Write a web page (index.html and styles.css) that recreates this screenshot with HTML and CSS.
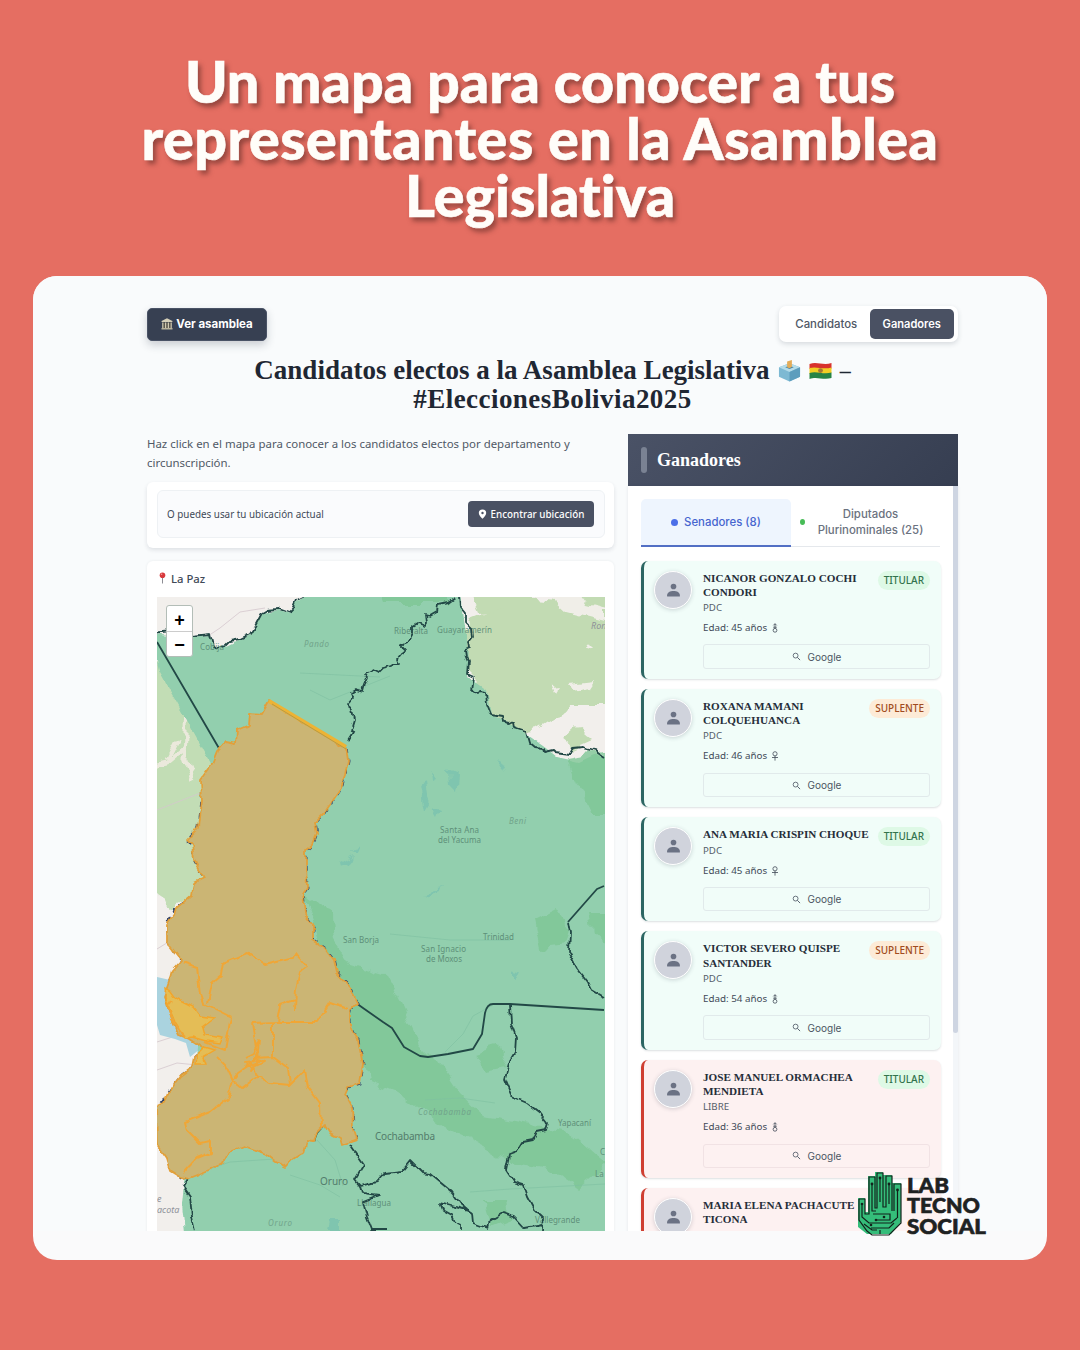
FILE: index.html
```html
<!DOCTYPE html>
<html lang="es">
<head>
<meta charset="utf-8">
<title>Candidatos electos a la Asamblea Legislativa</title>
<link rel="stylesheet" href="styles.css">
</head>
<body>
<svg class="sprite" aria-hidden="true">
  <symbol id="person" viewBox="0 0 16 16"><circle cx="8" cy="4.2" r="3"/><path d="M1.2 15v-1.4C1.2 10.6 4.400 9 8 9s6.800 1.600 6.800 4.600V15z"/></symbol>
  <symbol id="search" viewBox="0 0 10 10"><circle cx="4" cy="4" r="2.700" fill="none" stroke="currentColor" stroke-width=".9"/><path d="M6 6l3 3" stroke="currentColor" stroke-width="1"/></symbol>
  <symbol id="male" viewBox="0 0 8 10"><g fill="none" stroke="currentColor" stroke-width=".8"><circle cx="4" cy="7.300" r="1.900"/><path d="M4 5.400V.8M2.300 2.400L4 .7l1.700 1.700M2.200 4.200h3.600"/></g></symbol>
  <symbol id="female" viewBox="0 0 8 10"><g fill="none" stroke="currentColor" stroke-width=".8"><circle cx="4" cy="2.800" r="2.100"/><path d="M4 5v4.600M1 6.500h6"/></g></symbol>
</svg>

<h1 class="headline">Un mapa para conocer a tus<br><span class="headline-wide">representantes en la Asamblea</span><br>Legislativa</h1>

<main class="panel">
  <div class="app">
    <div class="topbar">
      <button class="btn-assembly">
        <svg width="12" height="12" viewBox="0 0 12 12"><path d="M6 .3L.6 3v1h10.800V3z" fill="#d5cfb8"/><path d="M1.500 4.500h9V10h-9z" fill="#5b574d"/><path d="M1.800 4.500v5.500M4.600 4.500v5.500M7.400 4.500v5.500M10.200 4.500v5.500" stroke="#cfc9b2" stroke-width="1.200"/><path d="M.5 10h11v1.500H.5z" fill="#b9b39c"/></svg>
        Ver asamblea
      </button>
      <div class="switch"><span class="switch-item">Candidatos</span><span class="switch-item switch-on">Ganadores</span></div>
    </div>

    <h2 class="title"><span class="title-line"><span class="title-main">Candidatos electos a la Asamblea Legislativa</span>
      <svg class="ballot" width="23" height="24" viewBox="0 0 24 24"><path d="M1 8l11-4 11 4v10l-11 5L1 18z" fill="#7db9d3"/><path d="M1 8l11-4 11 4-11 5z" fill="#b5dce9"/><path d="M12 13l11-5v10l-11 5z" fill="#5d9dbd"/><path d="M7.500 8L12 6.500 16.500 8 12 10z" fill="#4c86a1"/><path d="M9.500 2l5-1.500v7L12 9 9.500 8z" fill="#e3ac59"/></svg>
      <svg class="flag" width="23" height="18" viewBox="0 0 23 18"><path d="M.5 2C8-1 14 4 22.500 1v5.500C14 9 8 4 .5 7z" fill="#d8322d"/><path d="M.5 6C8 4 14 8 22.500 5.500V11C14 14 8 9 .5 12z" fill="#f2ce24"/><path d="M.5 11C8 8.500 14 13 22.500 10.500V16C14 18.500 8 14 .5 17z" fill="#278345"/><circle cx="11.500" cy="8.600" r="2.400" fill="#a77634"/></svg>
      <span class="title-dash">–</span></span>
      <span class="title-line title-tag">#EleccionesBolivia2025</span></h2>

    <div class="columns">
      <section class="left">
        <p class="intro">Haz click en el mapa para conocer a los candidatos electos por departamento y circunscripción.</p>
        <div class="locate-card">
          <div class="locate">
            <span>O puedes usar tu ubicación actual</span>
            <button class="btn-locate"><svg width="9" height="10" viewBox="0 0 9 10"><path d="M4.500.4a3.700 3.700 0 0 1 3.700 3.700c0 2.200-2 4-3.700 5.700C2.800 8.100.8 6.300.8 4.100A3.700 3.700 0 0 1 4.500.4z" fill="#fff"/><circle cx="4.500" cy="4" r="1.200" fill="#4a5366"/></svg>Encontrar ubicación</button>
          </div>
        </div>
        <div class="map-card">
          <div class="place"><svg width="7" height="12" viewBox="0 0 7 12"><path d="M3.500 5v6.500" stroke="#8d8d94" stroke-width="1"/><circle cx="3.500" cy="3.200" r="2.800" fill="#d8393c"/><circle cx="2.600" cy="2.300" r=".8" fill="#f2a3a0"/></svg>La Paz</div>
          <div class="map">
            <svg class="map-canvas" viewBox="157 597 448 634" width="448" height="634">
              <defs>
                <filter id="rough" filterUnits="userSpaceOnUse" x="140" y="580" width="480" height="670" color-interpolation-filters="sRGB"><feTurbulence type="fractalNoise" baseFrequency=".12" numOctaves="1" seed="4"/><feDisplacementMap in="SourceGraphic" scale="7" xChannelSelector="R" yChannelSelector="G"/></filter>
                <filter id="rough-land" filterUnits="userSpaceOnUse" x="140" y="580" width="480" height="670" color-interpolation-filters="sRGB"><feTurbulence type="fractalNoise" baseFrequency=".06" numOctaves="2" seed="9"/><feDisplacementMap in="SourceGraphic" scale="16" xChannelSelector="R" yChannelSelector="G"/></filter>
              </defs>
              <rect x="157" y="597" width="448" height="634" fill="#f2efec"/>
              <!-- neighbouring countries -->
              <g filter="url(#rough-land)">
                <path d="M145 655l25 12 20 25 40 50 5 60-20 100-20-5-20 10-30-20z" fill="#c2ddb5"/>
                <path d="M180 680l8 25-2 55 8 22M145 768l22-5 20-17M166 760l10-20" fill="none" stroke="#ebe9dc" stroke-width="5"/>
                <path d="M515 590l20 8 22 2 20 12 40 0v95h-45l-35 22-25 4-18-18-25-22 12-10-18-18-6-25 12-20 30-12z" fill="#c2dbb3"/>
                <path d="M468 590h40v22l-30 2z" fill="#c2dbb3"/>
                <path d="M543 590h30l32 20v10l-40-10zM568 685l26-3-4 6-18 3zM552 684l8-1-5 8zM590 640l5 8-8-2z" fill="#f0eee8"/>
                <path d="M578 592h35v20l-25-6zM562 740l15-14 16 14-20 9z" fill="#c2dbb3"/>
              </g>
              <path d="M157 1042l25-8M157 1070l20-7 20 2M192 664l22-12M205 638l15-10 20-16 25-4M157 949l13-8M157 810l46-18" fill="none" stroke="#d4c6cd" stroke-width=".8"/>
              <path d="M157 977l13 3-5 15 8 25 10 17 22 8-15 12-4-14-11-4-15-4-3-10z" fill="#aad3df"/>

              <!-- departments -->
              <g filter="url(#rough)">
                <path d="M150 633l42 4 18-2 3 12 14-1 23-11 12-22 16-3 11 4 8-12 14-10h150l3 28 4 26-1 30 20 14 5 24 23 13 11 7 16 11 15 12 22 5 17-8 32 10v500H188l-6-60 40-420-63-113z" fill="#92cfae"/>
              </g>
              <g fill="#7fc796" filter="url(#rough-land)" opacity=".8">
                <path d="M565 757l50-8v72l-20-15-20-25z"/>
                <path d="M303 895l30 20 2 27 14 22 36 10 15 28 20 42 16 16 20 30 27 26 33 5 55 12 36 30-28 25-20-15-47-10-35-20-28-13-27-20-30-20-25-10-15-50z"/>
                <path d="M535 920l20-10 14 20-4 15-24 3zM590 912h25v40l-22-20zM585 795h30v20h-25zM378 590h70v12h-65zM475 1055l25-8 8 20-25 4zM482 1200l24 0 4 20-20 8z"/>
              </g>
              <g fill="#76c0b0" filter="url(#rough-land)" opacity=".65">
                <path d="M418 785l9-3 2 14-7 12zM448 770l9 4-2 18-6-6zM428 806l10 4-3 7zM432 770l5 7-4 2zM495 760l12 5-3 6zM338 864l14-8-4 10-9 3zM422 892l25-3-15 6zM350 852l8-10-3 12zM513 968l6 8-6 3zM326 1220h16v10h-18z"/>
              </g>
              <path d="M445 1052l18-18 10-18 20-11M425 1100l35-2 35 5M290 1175l30 10 20 12M200 1172l30-10 60-4M317 1140l18 20 8 26M300 673l80 4M310 690l20 10 60-24M510 940l-60 0-60-6M470 1192l40-3 95-5" fill="none" stroke="#7ebfa1" stroke-width=".6"/>

              <!-- place names -->
              <g class="town">
                <text x="394" y="634" textLength="34">Riberalta</text><text x="437" y="633" textLength="55">Guayaramerín</text>
                <text x="440" y="833" textLength="39">Santa Ana</text><text x="438" y="843" textLength="43">del Yacuma</text>
                <text x="483" y="940" textLength="31">Trinidad</text><text x="343" y="943" textLength="36">San Borja</text>
                <text x="421" y="952" textLength="45">San Ignacio</text><text x="426" y="962" textLength="36">de Moxos</text>
                <text x="558" y="1126" textLength="33">Yapacaní</text><text x="357" y="1206" textLength="34">Llallagua</text>
                <text x="535" y="1223" textLength="45">Vallegrande</text><text x="200" y="650" textLength="24">Cobija</text>
                <text x="595" y="1177">La</text><text x="600" y="1155">C</text>
              </g>
              <g class="town town-big"><text x="375" y="1140" textLength="60">Cochabamba</text><text x="320" y="1185" textLength="28">Oruro</text></g>
              <g class="region"><text x="304" y="647" textLength="25">Pando</text><text x="509" y="824" textLength="17">Beni</text><text x="418" y="1115" textLength="53">Cochabamba</text><text x="268" y="1226" textLength="24">Oruro</text><text class="foreign" x="591" y="629">Ron</text><text class="foreign" x="157" y="1202">e</text><text class="foreign" x="157" y="1213">acota</text></g>

              <!-- department limits -->
              <path class="limit" d="M157 642L220 750M356 1003l7 5 20 14 9 6 12 19 16 9 8 1 20-3 25-5 9-15 3-21q2-9 8-9h17l94 6M604 886l-7 3-29 33"/>
              <g class="limit" filter="url(#rough)">
                <path d="M150 633l22-2 20 5 18-2 3 12 4 2 8-2 5-5 10-2 10-5 5-8 7-13 5-3 11-1 11 4 4-4 4-9 10-5"/>
                <path d="M455 597l-7 5-10 2-1 8-7 4-4-1 1 8-2 3-7-3-5 3v8l-5 9-7 3 4 4-5 4-3 4 2 5-6 0-2 3-8 2-4 4-6-3-8 4 3 4-3 7-2 8-7-2-5 3 3 4-7 8 5 4 2 10-3 10 3 4-5 8"/>
                <path d="M460 597l1 10 5 6v9l6 6 1 9-4 5 1 6-5 2 1 7 2 5-1 12 7 3-2 14 5 4 2-3 7 1 1 11 4 10 12 2 1 7 5 1 4-2 1 6 12 4 3 11 6 5 8 1 1 3 9-2 2 2 15 2 3-6 10-1 12 3 10 7"/>
                <path d="M568 922l2 11-1 20 8 15 11 14 4 8 12 7M510 1005l1 18 5 14-1 16-6 10-4 15 8 19 14 6 13 10 8 10-2 7-10 2-3 8-10 2-6 10-8 3-3 15 8 12 10 3 4 12 7 13 8 7-1 14"/>
                <path d="M350 1145l14 20-9 15 5 6 17-4 8-9 17-2 8-10 12 12 8 1 22 18 8 11 12 10 1 10 14 5 2-7 14-8 12 4 10 11 17-3M468 1210l-13-3-15-4 3 7 9 5 3 7 7 3 0 6M360 1186l2 8 16 2-15 6 4 15 5 13h15"/>
                <path d="M180 1175l8 4-5 8 7 10 2 20 3 13M314 1142l3-8 8-9"/>
              </g>

              <!-- La Paz and its districts -->
              <g filter="url(#rough)">
                <path class="lapaz-shadow" d="M346 748l2 12-3 16-5 14-15 22-10 10 2 12-4 10-7 6v14l1 24-4 6 2 20 8 10v16l12 8 9 12 3 13 13 14 7 16-7 7v12l8 18 5 25-3 18-12 4-3 7 7 13 1 20 4 13M205 1048l-10 9-2 10-11 8-12 15-8 12-5 3v38l11 14 4 13 12 8M203 780l-1 20-3 27-12 13 6 8 2 14 10 17-10 5-2 12-18 12-8 17 2 17 12 18-8 12-4 12"/>
                <path class="lapaz" d="M269 701L346 748l2 12-3 16-5 14-15 22-10 10 2 12-4 10-7 6v14l1 24-4 6 2 20 8 10v16l12 8 9 12 3 13 13 14 7 16-7 7v12l8 18 5 25-3 18-12 4-3 7 7 13 1 20 4 13-15 5-2-7-10-5-5-8-8 8-3 9-7-1-3 11-11 7-7 8-10-5-10-8-22-8-15 6-5 10-15 9-20 8-10-3-8-5-4-13-10-14-1-38 8-4 5-11 11-15 12-9 2-10 10-8-15-10-10-4-7-15-8-24 5-14 3-12 9-10-14-18v-17l7-10 2-7 16-13 2-12 10-5-10-18-2-15-5-5 12-13 3-27-1-20 10-14 6-15 9-10 10 2 1-12 12-5 1-13 12 1z"/>
                <path d="M165 988l5 3 5 7 18 9 7 9 15 2-12 9 2 8 17 3-2 5-13-2-14-4-8 1-10-16-8-19zM197 1055l8-8 10 3-12 7 2 6-9 0z" class="shore"/>
                <path class="district" d="M182 962l15 5 3 28 3 8 14 7 14 7-6 33-20-8M208 1003l4-20 9-8 2-12 24-10 18 12 28-7 2-5 12 14-7 5-4 18-1 20M252 1023l25-1 3-17 15-5M277 1022h40l13-20 17 6M252 1023l5 32-4 7M273 1022v35l15 11 2 17 15-15 3 17 12 16 1 24M253 1062l-15 10-6 8 10 8 15-11-4-15M257 1077l13 6 20 2M253 1058l20-1M217 1057l8 8 7 15-4 18-18 14-25 10 2 8 13 13 10-2v12l-13 5-14 15M245 1058l8-4 6-14-2 20 7 2-12 6-7-6 14-1-9 10 6-18M172 1001l-4 5 4 14 13 16"/>
              </g>
              <path d="M269 701l77 46" stroke="#edb334" stroke-width="4"/><path d="M272 704l74 45" stroke="#b59a48" stroke-width="1"/>
            </svg>
            <div class="zoom"><span>+</span><span>−</span></div>
          </div>
        </div>
      </section>

      <section class="right">
        <header class="winners"><i class="winners-bar"></i><h3>Ganadores</h3></header>
        <div class="winners-body">
          <div class="scroll">
            <nav class="tabs">
              <div class="tab tab-on"><i class="dot blue"></i><span>Senadores (8)</span></div>
              <div class="tab"><i class="dot green"></i><span>Diputados Plurinominales (25)</span></div>
            </nav>
            <div class="cards">
              <article class="card">
                <div class="avatar"><svg><use href="#person"/></svg></div>
                <div class="info"><div class="head"><h4>NICANOR GONZALO COCHI<br>CONDORI</h4><span class="badge titular">TITULAR</span></div>
                  <p class="party">PDC</p><p class="age">Edad: 45 años <svg><use href="#male"/></svg></p><div class="google"><svg><use href="#search"/></svg>Google</div></div>
              </article>
              <article class="card">
                <div class="avatar"><svg><use href="#person"/></svg></div>
                <div class="info"><div class="head"><h4>ROXANA MAMANI<br>COLQUEHUANCA</h4><span class="badge suplente">SUPLENTE</span></div>
                  <p class="party">PDC</p><p class="age">Edad: 46 años <svg><use href="#female"/></svg></p><div class="google"><svg><use href="#search"/></svg>Google</div></div>
              </article>
              <article class="card">
                <div class="avatar"><svg><use href="#person"/></svg></div>
                <div class="info"><div class="head"><h4>ANA MARIA CRISPIN CHOQUE</h4><span class="badge titular">TITULAR</span></div>
                  <p class="party">PDC</p><p class="age">Edad: 45 años <svg><use href="#female"/></svg></p><div class="google"><svg><use href="#search"/></svg>Google</div></div>
              </article>
              <article class="card">
                <div class="avatar"><svg><use href="#person"/></svg></div>
                <div class="info"><div class="head"><h4>VICTOR SEVERO QUISPE<br>SANTANDER</h4><span class="badge suplente">SUPLENTE</span></div>
                  <p class="party">PDC</p><p class="age">Edad: 54 años <svg><use href="#male"/></svg></p><div class="google"><svg><use href="#search"/></svg>Google</div></div>
              </article>
              <article class="card libre">
                <div class="avatar"><svg><use href="#person"/></svg></div>
                <div class="info"><div class="head"><h4>JOSE MANUEL ORMACHEA<br>MENDIETA</h4><span class="badge titular">TITULAR</span></div>
                  <p class="party">LIBRE</p><p class="age">Edad: 36 años <svg><use href="#male"/></svg></p><div class="google"><svg><use href="#search"/></svg>Google</div></div>
              </article>
              <article class="card libre">
                <div class="avatar"><svg><use href="#person"/></svg></div>
                <div class="info"><div class="head"><h4>MARIA ELENA PACHACUTE<br>TICONA</h4></div></div>
              </article>
            </div>
          </div>
          <div class="track"><i class="thumb"></i></div>
        </div>
      </section>
    </div>
  </div>

  <svg class="logo" width="132" height="68" viewBox="856 1170 132 68">
    <path d="M858 1198h7v14h3v-36h7v-4h8v3h9v8h9v39l-10 12h-24l-9-7z" fill="#35bd7a"/>
    <g fill="none" stroke="#12221b" stroke-width="1.200">
      <path d="M859 1199v21l8 11 5 4h17l12-12v-39h-7v27M859 1199h6v15h4v-37h6v31h2v-35h6v34h3v-31h6v35"/>
      <path d="M872 1185v26h4M880 1178v24M889 1184v20M897.500 1191v27M873 1214h17v6h-14M862 1205v12l7 6h22l6-5M864 1224l8 6h5M871 1228h18l5-5M880 1234v-4"/>
    </g>
    <g fill="#12221b"><circle cx="872" cy="1184" r="1.400"/><circle cx="880" cy="1178" r="1.400"/><circle cx="889" cy="1184" r="1.400"/><circle cx="897.500" cy="1190" r="1.400"/><circle cx="884" cy="1217" r="1.300"/><circle cx="862" cy="1204" r="1.300"/><circle cx="876" cy="1220" r="1.300"/><circle cx="871" cy="1225" r="1.300"/></g>
    <g class="logo-text"><text x="907" y="1192.500" textLength="42" lengthAdjust="spacingAndGlyphs">LAB</text><text x="907" y="1213" textLength="73" lengthAdjust="spacingAndGlyphs">TECNO</text><text x="907" y="1233.500" textLength="79" lengthAdjust="spacingAndGlyphs">SOCIAL</text></g>
  </svg>
</main>
</body>
</html>
```
FILE: styles.css
```css
* { box-sizing: border-box; }
body { margin: 0; width: 1080px; height: 1350px; overflow: hidden; background: #e56e62; font-family: "Noto Sans", sans-serif; color: #404957; }
h1, h2, h3, h4, p { margin: 0; }
button { border: 0; }
svg { flex: none; }
.sprite { display: none; }

.headline { height: 276px; padding-top: 52px; text-align: center; font: 900 57.500px/57px Lato, sans-serif; font-variant-ligatures: none; color: #fffdf9; text-shadow: 3px 4px 5px rgba(90, 40, 35, .6); -webkit-text-stroke: .6px #fffdf9; }
.headline-wide { letter-spacing: .45px; }

.panel { position: relative; width: 1014px; height: 984px; margin: 0 33px; border-radius: 24px; background: #fafafb; overflow: hidden; }
.app { height: 955px; padding: 30px 89px 0 114px; overflow: hidden; background: #f9fbfc; }

.topbar { display: flex; justify-content: space-between; align-items: center; height: 36px; }
.btn-assembly { display: flex; align-items: center; justify-content: center; gap: 3px; width: 120px; height: 33px; padding: 0; border-radius: 5px; border: 1px solid #4a5366; background: #374052; color: #fff; font: 700 11.500px Inter, sans-serif; box-shadow: 0 4px 8px rgba(40, 50, 70, .22); }
.switch { display: flex; width: 179px; height: 36px; padding: 3px 4px; border-radius: 7px; background: #fff; box-shadow: 0 2px 5px rgba(40, 50, 70, .16); }
.switch-item { display: flex; align-items: center; justify-content: center; width: 87px; border-radius: 5px; font: 500 11.400px Inter, sans-serif; color: #505866; }
.switch-on { width: 85px; background: #4a5163; color: #fff; font-weight: 600; font-size: 11.100px; }

.title { margin-top: 14px; height: 78px; font: 700 27px/29px "Liberation Serif", serif; color: #1f2733; }
.title-line { display: flex; justify-content: center; align-items: center; gap: 8px; height: 29px; }
.title-tag { letter-spacing: .45px; }
.title-dash { width: 11px; font-size: 22px; }

.columns { display: grid; grid-template-columns: 467px 330px; gap: 14px; }
.intro { height: 48px; font-size: 11.430px; line-height: 19px; color: #505966; }
.locate-card { height: 66px; padding: 8px 9px 9px 10px; border-radius: 6px; background: #fff; box-shadow: 0 2px 4px rgba(40, 50, 70, .13); }
.locate { display: flex; align-items: center; justify-content: space-between; height: 48px; padding: 0 10px 0 9px; border: 1px solid #eef1f4; border-radius: 6px; background: #fafbfd; font-size: 9.850px; }
.btn-locate { display: flex; align-items: center; justify-content: center; gap: 4px; width: 126px; height: 26px; padding: 0; border-radius: 4px; background: #4a5163; color: #fff; font: 500 9.850px "Noto Sans", sans-serif; }
.map-card { height: 700px; margin-top: 13px; padding: 0 9px 0 10px; background: #fff; border-radius: 6px; box-shadow: 0 0 3px rgba(40, 50, 70, .08); }
.place { display: flex; align-items: center; gap: 5px; height: 36px; padding: 0 0 2px 2px; font-size: 11.300px; font-weight: 500; }
.map { position: relative; height: 634px; }
.map-canvas { display: block; }
.zoom { position: absolute; left: 9px; top: 8px; width: 27px; height: 52px; display: flex; flex-direction: column; border: 1px solid #b3bdb7; border-radius: 3px; background: #fff; color: #000; }
.zoom span { flex: 1; display: flex; align-items: center; justify-content: center; padding-top: 3px; font: 700 18px/1 "Liberation Sans", sans-serif; }
.zoom span + span { border-top: 1px solid #ccc; }
.town text { font-size: 8px; fill: #5e9079; stroke: none; }
.town.town-big text { font-size: 10px; fill: #527c6b; }
.region text { font-size: 8px; font-style: italic; fill: #71a48b; }
.region .foreign { font-size: 9px; fill: #8f9199; }
.limit { fill: none; stroke: #224846; stroke-width: 1.800; stroke-linejoin: round; }
.lapaz { fill: #cbb574; stroke: #e2a03a; stroke-width: 1.800; stroke-linejoin: round; }
.lapaz-shadow { fill: none; stroke: #34456a; stroke-width: 3; stroke-dasharray: 5 6; }
.shore { fill: #e4bd56; stroke: #f3a529; stroke-width: 1.400; }
.district { fill: none; stroke: #f0a635; stroke-width: 1.900; stroke-linejoin: round; }

.winners { display: flex; align-items: center; height: 52px; padding-left: 13px; gap: 10px; background: linear-gradient(135deg, #4a5266, #363e51); color: #fff; }
.winners-bar { width: 6px; height: 26px; border-radius: 3px; background: #7a8293; }
.winners h3 { font: 700 18px "Liberation Serif", serif; }
.winners-body { display: flex; height: 800px; background: #fff; box-shadow: 0 0 3px rgba(40, 50, 70, .1); }
.scroll { width: 325px; padding: 13px 12px 0 13px; }
.track { width: 5px; background: #f3f6f9; }
.thumb { display: block; height: 547px; border-radius: 0 0 3px 3px; background: #ced5e2; }
.tabs { display: grid; grid-template-columns: 150px 149px; height: 48px; }
.tab { display: flex; align-items: center; justify-content: center; gap: 6px; border-bottom: 1px solid #e5e8ec; padding: 0; text-align: center; font: 500 11.400px/16px Inter, sans-serif; color: #6b7280; }
.tab:not(.tab-on) { padding: 0 10px 1px 9px; }
.tab:not(.tab-on) span { flex: 1; }
.tab-on { background: #eef5fe; border-bottom: 2px solid #526fc4; border-radius: 5px 5px 0 0; color: #4765cf; }
.dot { flex: none; width: 7px; height: 7px; border-radius: 50%; }
.green { width: 5px; height: 6px; background: #47bc57; }
.blue { background: #4b6fe8; }

.cards { display: flex; flex-direction: column; gap: 9.900px; margin-top: 13.500px; }
.card { display: flex; gap: 11px; padding: 9px 11px 10px 10px; width: 300px; border-left: 3px solid #2c6663; border-radius: 7px; background: #f1fdf9; box-shadow: 0 1px 2px rgba(40, 60, 70, .16); }
.libre { border-left-color: #cf3f32; background: #fdf1f1; }
.avatar { display: flex; align-items: center; justify-content: center; width: 38px; height: 38px; margin-top: 1px; border-radius: 50%; border: 1.500px solid #fff; background: #d0d3dc; box-shadow: 0 1px 4px rgba(40, 50, 70, .2); color: #6b7284; }
.avatar svg { width: 15px; height: 16px; fill: #6b7284; }
.info { flex: 1; min-width: 0; }
.head { display: flex; justify-content: space-between; align-items: flex-start; }
.head h4 { padding-top: 1px; margin-bottom: -1px; font: 700 11.150px/14.300px "Liberation Serif", serif; color: #262e39; white-space: nowrap; }
.badge { height: 19px; margin: 1px 0 -6px; padding: 0 6px; border-radius: 10px; font-size: 10px; line-height: 18px; font-weight: 500; }
.titular { background: #def9e6; color: #32734c; }
.suplente { background: #fdebd7; color: #a14b20; }
.party { margin-top: 2px; font-size: 9.700px; line-height: 16px; color: #555e69; }
.age { display: flex; align-items: center; gap: 4px; margin-top: 4px; font-size: 9.800px; line-height: 16px; color: #404957; }
.age svg { width: 8px; height: 10px; }
.google { display: flex; align-items: center; justify-content: center; gap: 7px; height: 24.500px; margin-top: 8.400px; border: 1px solid #e1eaeb; border-radius: 3px; font: 400 10px Inter, sans-serif; color: #4b5563; }
.libre .google { border-color: #f1e2e4; }
.google svg { width: 9px; height: 9px; }

.logo { position: absolute; left: 823px; top: 894px; }
.logo-text text { font: 900 20px Lato, sans-serif; fill: #1e2222; stroke: #1e2222; stroke-width: .6; }
```
